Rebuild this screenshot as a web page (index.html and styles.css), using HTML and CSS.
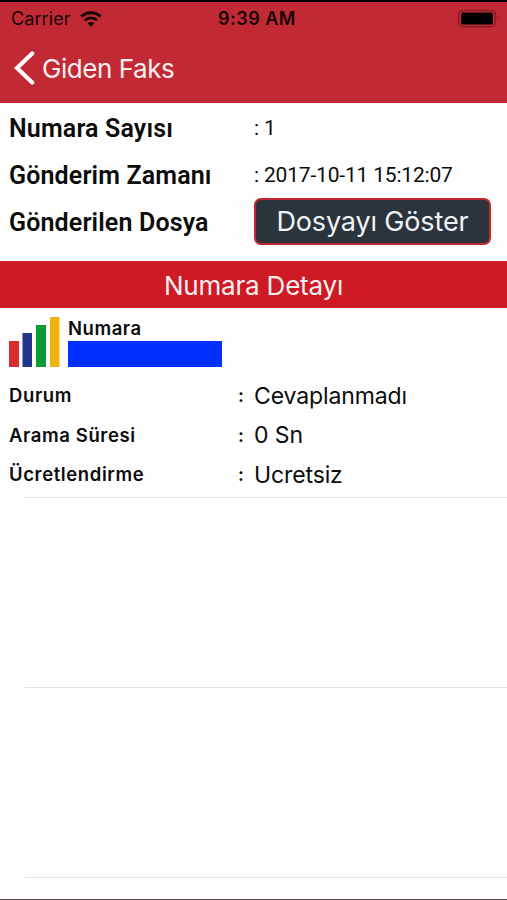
FILE: index.html
```html
<!DOCTYPE html>
<html lang="tr">
<head>
    <meta charset="UTF-8" />
    <title>Giden Faks</title>
    <link rel="stylesheet" href="styles.css">
</head>
<body>
    <div class="header">
        <div class="status-bar">
            <div class="carrier">
                <span>Carrier</span>
                <svg class="wifi" width="22" height="16" viewBox="0 0 22 16">
                    <path d="M1.3 5.6 A14 14 0 0 1 20.7 5.6" fill="none" stroke="#160406" stroke-width="3" />
                    <path d="M4.9 9.4 A8.7 8.7 0 0 1 17.1 9.4" fill="none" stroke="#160406" stroke-width="2.7" />
                    <path d="M11 15.8 L7.6 12.3 A4.8 4.8 0 0 1 14.4 12.3 Z" fill="#160406" />
                </svg>
            </div>
            <span class="time">9:39 AM</span>
            <div class="battery">
                <svg width="42" height="18" viewBox="0 0 42 18">
                    <rect x="0.8" y="0.3" width="36.4" height="16.4" rx="4" fill="none" stroke="#7d1a21" stroke-width="1.3" />
                    <rect x="3.3" y="2.5" width="31.5" height="12" rx="1.5" fill="#000" />
                    <path d="M39.5 5.8 Q41.5 8.3 39.5 10.8 Z" fill="#7d1a21" />
                </svg>
            </div>
        </div>
        <div class="nav-bar">
            <svg class="back" width="21" height="34" viewBox="0 0 21 34">
                <path d="M18.2 2.5 L3 17 L18.2 31.5" fill="none" stroke="#fff" stroke-width="4.2" stroke-linecap="round" />
            </svg>
            <span class="title">Giden Faks</span>
        </div>
    </div>

    <div class="info">
        <div class="info-row">
            <span class="info-label">Numara Sayısı</span>
            <span class="info-value">: 1</span>
        </div>
        <div class="info-row">
            <span class="info-label">Gönderim Zamanı</span>
            <span class="info-value">: 2017-10-11 15:12:07</span>
        </div>
        <div class="info-row">
            <span class="info-label">Gönderilen Dosya</span>
            <button class="show-file">Dosyayı Göster</button>
        </div>
    </div>

    <div class="section-title">Numara Detayı</div>

    <div class="detail">
        <div class="number">
            <svg class="bars" width="54" height="52" viewBox="0 0 54 52">
                <rect x="1" y="25" width="10" height="26" fill="#dc2b2c" />
                <rect x="14.5" y="17" width="9.5" height="34" fill="#22348c" />
                <rect x="28" y="9" width="10" height="42" fill="#0a9b37" />
                <rect x="42" y="1" width="9.5" height="50" fill="#f0b40f" />
            </svg>
            <div>
                <div class="number-label">Numara</div>
                <div class="number-value"></div>
            </div>
        </div>
        <div class="detail-row">
            <span class="detail-label">Durum</span>
            <span class="colon">:</span>
            <span class="detail-value">Cevaplanmadı</span>
        </div>
        <div class="detail-row">
            <span class="detail-label">Arama Süresi</span>
            <span class="colon">:</span>
            <span class="detail-value">0 Sn</span>
        </div>
        <div class="detail-row">
            <span class="detail-label">Ücretlendirme</span>
            <span class="colon">:</span>
            <span class="detail-value">Ucretsiz</span>
        </div>
    </div>
    <div class="empty-row"></div>
    <div class="empty-row"></div>
</body>
</html>
```
FILE: styles.css
```css
* {
    box-sizing: border-box;
}

body {
    margin: 0;
    height: 900px;
    overflow: hidden;
    background: #fefefe;
    border-top: 2px solid #000;
    border-bottom: 1px solid #4a4648;
    font-family: Inter, "Liberation Sans", sans-serif;
    color: #0c0c0c;
}

.header {
    height: 101px;
    background: #c12a34;
}

.status-bar {
    display: grid;
    grid-template-columns: 1fr auto 1fr;
    align-items: center;
    height: 33px;
    padding: 0 7px 0 11px;
    font-size: 18px;
    color: #160406;
}

.carrier {
    display: flex;
    align-items: center;
    gap: 9px;
    letter-spacing: 0.1px;
}

.time {
    padding-left: 3px;
    font-weight: 600;
    letter-spacing: 0.5px;
}

.battery {
    display: flex;
    justify-content: flex-end;
}

.nav-bar {
    display: flex;
    align-items: center;
    height: 66px;
    padding-left: 14px;
    gap: 7px;
}

.title {
    font-size: 26px;
    letter-spacing: -0.45px;
    color: #fdeff0;
}

.info {
    height: 158px;
    padding: 1px 16px 0 9px;
}

.info-row {
    display: grid;
    grid-template-columns: 245px 237px;
    align-items: center;
    height: 47px;
    font-family: Roboto, sans-serif;
}

.info-label {
    padding-top: 2px;
    font-size: 25px;
    font-weight: 600;
    letter-spacing: 0.15px;
}

.info-value {
    font-size: 21px;
    letter-spacing: -0.18px;
}

.show-file {
    height: 47px;
    padding: 0;
    border: 2px solid #c1272f;
    border-radius: 7px;
    background: #2b343c;
    color: #f0f3f5;
    font-family: Inter, sans-serif;
    font-size: 27px;
    letter-spacing: -0.15px;
}

.section-title {
    height: 47px;
    line-height: 49px;
    background: #cd1a25;
    color: #fdeff0;
    font-size: 26px;
    letter-spacing: -0.2px;
    text-align: center;
}

.detail {
    height: 189px;
    padding: 8px 0 0 8px;
}

.number {
    display: flex;
    height: 60px;
    gap: 6px;
}

.number-label {
    height: 25px;
    line-height: 25px;
    font-size: 18.5px;
    font-weight: 600;
    letter-spacing: 0.55px;
}

.number-value {
    width: 154px;
    height: 26px;
    background: #0030ff;
}

.detail-row {
    display: grid;
    grid-template-columns: 229px 16px 1fr;
    align-items: center;
    height: 39.5px;
    padding-left: 1px;
}

.detail-label, .colon {
    padding-bottom: 1px;
    font-size: 18.5px;
    font-weight: 600;
    letter-spacing: 0.6px;
}

.detail-value {
    font-size: 23px;
    letter-spacing: -0.12px;
}

.empty-row {
    height: 191px;
    margin-left: 25px;
    border-top: 1px solid #e3e3e3;
    border-bottom: 1px solid #e3e3e3;
}

.empty-row + .empty-row {
    height: 190px;
    border-top: none;
}
```
